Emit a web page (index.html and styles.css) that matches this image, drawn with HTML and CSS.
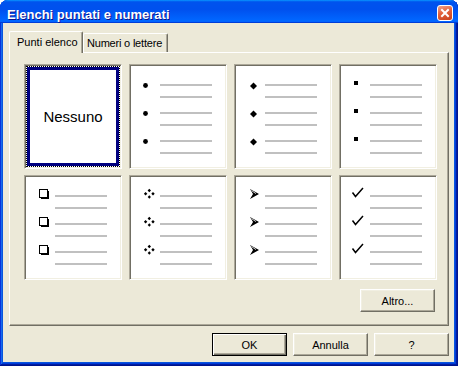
FILE: index.html
```html
<!DOCTYPE html>
<html lang="it">
<head>
    <meta charset="UTF-8">
    <title>Elenchi puntati e numerati</title>
    <link rel="stylesheet" href="styles.css">
</head>
<body>
    <div class="window">
        <div class="titlebar">
            <span class="title">Elenchi puntati e numerati</span>
            <button class="close" aria-label="Chiudi">
                <svg width="14" height="14" viewBox="0 0 14 14"><path d="M4 4 L10 10 M10 4 L4 10" stroke="#fff" stroke-width="2" stroke-linecap="square"/></svg>
            </button>
        </div>

        <div class="content">
            <div class="tabs">
                <div class="tab active">Punti elenco</div>
                <div class="tab">Numeri o lettere</div>
            </div>

            <section class="panel">
                <div class="grid">
                    <div class="tile none">
                        <div class="focus"><div class="sel">Nessuno</div></div>
                    </div>

                    <div class="tile">
                        <div class="item"><svg class="bullet" viewBox="0 0 30 16"><circle cx="15.5" cy="9.5" r="2.4"/></svg><div class="lines"><i></i><i></i></div></div>
                        <div class="item"><svg class="bullet" viewBox="0 0 30 16"><circle cx="15.5" cy="9.5" r="2.4"/></svg><div class="lines"><i></i><i></i></div></div>
                        <div class="item"><svg class="bullet" viewBox="0 0 30 16"><circle cx="15.5" cy="9.5" r="2.4"/></svg><div class="lines"><i></i><i></i></div></div>
                    </div>

                    <div class="tile">
                        <div class="item"><svg class="bullet" viewBox="0 0 30 16"><polygon points="18.5,6.5 22,10 18.5,13.5 15,10"/></svg><div class="lines"><i></i><i></i></div></div>
                        <div class="item"><svg class="bullet" viewBox="0 0 30 16"><polygon points="18.5,6.5 22,10 18.5,13.5 15,10"/></svg><div class="lines"><i></i><i></i></div></div>
                        <div class="item"><svg class="bullet" viewBox="0 0 30 16"><polygon points="18.5,6.5 22,10 18.5,13.5 15,10"/></svg><div class="lines"><i></i><i></i></div></div>
                    </div>

                    <div class="tile">
                        <div class="item"><svg class="bullet" viewBox="0 0 30 16"><rect x="14" y="5" width="4" height="4"/></svg><div class="lines"><i></i><i></i></div></div>
                        <div class="item"><svg class="bullet" viewBox="0 0 30 16"><rect x="14" y="5" width="4" height="4"/></svg><div class="lines"><i></i><i></i></div></div>
                        <div class="item"><svg class="bullet" viewBox="0 0 30 16"><rect x="14" y="5" width="4" height="4"/></svg><div class="lines"><i></i><i></i></div></div>
                    </div>

                    <div class="tile">
                        <div class="item"><svg class="bullet" viewBox="0 0 30 16"><rect x="14.5" y="2.5" width="8" height="8" fill="none" stroke="#000"/><path d="M23 4h1v8h-8v-1h7z"/></svg><div class="lines"><i></i><i></i></div></div>
                        <div class="item"><svg class="bullet" viewBox="0 0 30 16"><rect x="14.5" y="2.5" width="8" height="8" fill="none" stroke="#000"/><path d="M23 4h1v8h-8v-1h7z"/></svg><div class="lines"><i></i><i></i></div></div>
                        <div class="item"><svg class="bullet" viewBox="0 0 30 16"><rect x="14.5" y="2.5" width="8" height="8" fill="none" stroke="#000"/><path d="M23 4h1v8h-8v-1h7z"/></svg><div class="lines"><i></i><i></i></div></div>
                    </div>

                    <div class="tile">
                        <div class="item"><svg class="bullet" viewBox="0 0 30 16"><polygon points="19.3,1.7 21,3.5 19.3,5.2 17.6,3.5"/><polygon points="15.6,5 17.3,6.7 15.6,8.4 13.9,6.7"/><polygon points="23,5 24.7,6.7 23,8.4 21.3,6.7"/><polygon points="19.3,8.2 20.9,10 19.3,11.8 17.7,10"/></svg><div class="lines"><i></i><i></i></div></div>
                        <div class="item"><svg class="bullet" viewBox="0 0 30 16"><polygon points="19.3,1.7 21,3.5 19.3,5.2 17.6,3.5"/><polygon points="15.6,5 17.3,6.7 15.6,8.4 13.9,6.7"/><polygon points="23,5 24.7,6.7 23,8.4 21.3,6.7"/><polygon points="19.3,8.2 20.9,10 19.3,11.8 17.7,10"/></svg><div class="lines"><i></i><i></i></div></div>
                        <div class="item"><svg class="bullet" viewBox="0 0 30 16"><polygon points="19.3,1.7 21,3.5 19.3,5.2 17.6,3.5"/><polygon points="15.6,5 17.3,6.7 15.6,8.4 13.9,6.7"/><polygon points="23,5 24.7,6.7 23,8.4 21.3,6.7"/><polygon points="19.3,8.2 20.9,10 19.3,11.8 17.7,10"/></svg><div class="lines"><i></i><i></i></div></div>
                    </div>

                    <div class="tile">
                        <div class="item"><svg class="bullet" viewBox="0 0 30 16"><polygon points="15,2 24,7 15,12 18,7"/><path d="M16.5 3.6 L21 6.6" stroke="#fff" stroke-width="0.8"/></svg><div class="lines"><i></i><i></i></div></div>
                        <div class="item"><svg class="bullet" viewBox="0 0 30 16"><polygon points="15,2 24,7 15,12 18,7"/><path d="M16.5 3.6 L21 6.6" stroke="#fff" stroke-width="0.8"/></svg><div class="lines"><i></i><i></i></div></div>
                        <div class="item"><svg class="bullet" viewBox="0 0 30 16"><polygon points="15,2 24,7 15,12 18,7"/><path d="M16.5 3.6 L21 6.6" stroke="#fff" stroke-width="0.8"/></svg><div class="lines"><i></i><i></i></div></div>
                    </div>

                    <div class="tile">
                        <div class="item"><svg class="bullet" viewBox="0 0 30 16"><path d="M12.5 5.5 L15.5 9.5 L23 1" fill="none" stroke="#000" stroke-width="1.5"/></svg><div class="lines"><i></i><i></i></div></div>
                        <div class="item"><svg class="bullet" viewBox="0 0 30 16"><path d="M12.5 5.5 L15.5 9.5 L23 1" fill="none" stroke="#000" stroke-width="1.5"/></svg><div class="lines"><i></i><i></i></div></div>
                        <div class="item"><svg class="bullet" viewBox="0 0 30 16"><path d="M12.5 5.5 L15.5 9.5 L23 1" fill="none" stroke="#000" stroke-width="1.5"/></svg><div class="lines"><i></i><i></i></div></div>
                    </div>
                </div>

                <div class="panel-foot">
                    <button class="btn">Altro...</button>
                </div>
            </section>

            <div class="actions">
                <button class="btn default">OK</button>
                <button class="btn">Annulla</button>
                <button class="btn">?</button>
            </div>
        </div>
    </div>
</body>
</html>
```

FILE: styles.css
```css
body {
    margin: 0;
    background-color: #fff;
    font-family: "Liberation Sans", Arial, sans-serif;
    font-size: 11px;
    color: #000;
}

.window {
    width: 458px;
    height: 366px;
    box-sizing: border-box;
    display: flex;
    flex-direction: column;
    background-color: #0855dd;
    border-radius: 8px 8px 0 0;
    overflow: hidden;
    box-shadow: inset -1px -1px #00138c, inset 1px 1px #0831d9,
                inset -2px -2px #001ea0, inset 2px 2px #166aee,
                inset -3px -3px #003bda, inset 3px 3px #0855dd;
}

/* title bar */
.titlebar {
    height: 23px;
    display: flex;
    align-items: flex-start;
    padding: 0 5px 0 7px;
    background: linear-gradient(180deg, #0997ff, #0053ee 8%, #0050ee 40%, #06f 88%, #06f 93%, #005bff 95%, #003dd7 96%, #003dd7);
}

.title {
    flex: 1;
    margin-top: 7px;
    color: #fff;
    font-weight: bold;
    font-size: 13px;
    line-height: 15px;
    text-shadow: 1px 1px #0f1089;
    white-space: nowrap;
}

.close {
    width: 16px;
    height: 16px;
    margin-top: 5px;
    padding: 0;
    box-sizing: border-box;
    border: 1px solid #fff;
    border-radius: 3px;
    display: flex;
    align-items: center;
    justify-content: center;
    background: linear-gradient(160deg, #f1a38b, #e2613b 45%, #c8401b);
}

.close svg {
    display: block;
}

/* dialog body */
.content {
    flex: 1;
    margin: 0 4px 4px 3px;
    padding: 8px 5px 6px 6px;
    background-color: #ece9d8;
    display: flex;
    flex-direction: column;
}

.tabs {
    height: 21px;
    display: flex;
    align-items: flex-end;
}

.tab {
    height: 19px;
    box-sizing: border-box;
    padding: 3px 0 0 3px;
    line-height: 13px;
    background-color: #ece9d8;
    border: 1px solid #fff;
    border-bottom: none;
    border-right-color: #716f64;
    border-radius: 2px 2px 0 0;
    box-shadow: inset -1px 0 #aca899;
    white-space: nowrap;
    width: 85px;
    letter-spacing: -0.2px;
}

.tab.active {
    position: relative;
    z-index: 1;
    width: 74px;
    height: 22px;
    margin-bottom: -1px;
    padding: 4px 0 0 7px;
    letter-spacing: 0;
}

.panel {
    height: 274px;
    box-sizing: border-box;
    padding: 11px 11px 13px 14px;
    border: 1px solid;
    border-color: #fff #716f64 #716f64 #fff;
    box-shadow: inset -1px -1px #aca899;
}

.grid {
    display: grid;
    grid-template-columns: repeat(4, 98px);
    grid-auto-rows: 105px;
    column-gap: 7px;
    row-gap: 6px;
}

.tile {
    box-sizing: border-box;
    padding-top: 19px;
    background-color: #fff;
    border: 1px solid;
    border-color: #aca899 #fff #fff #aca899;
    box-shadow: inset 1px 1px #716f64, inset -1px -1px #f1efe2;
}

.item {
    height: 28px;
    display: flex;
    align-items: flex-start;
}

.bullet {
    flex: none;
    width: 30px;
    height: 16px;
    margin-top: -8px;
}

.lines {
    width: 52px;
}

.lines i {
    display: block;
    height: 2px;
    margin-bottom: 10px;
    background-color: #c0c0c0;
}

/* selected "none" tile */
.tile.none {
    padding: 1px;
    display: flex;
}

.focus {
    flex: 1;
    display: flex;
    border: 1px dotted #000;
    background-color: #fff;
}

.sel {
    flex: 1;
    display: flex;
    align-items: center;
    justify-content: center;
    border: 3px solid #000080;
    font-size: 15px;
}

.panel-foot {
    display: flex;
    justify-content: flex-end;
    margin-top: 9px;
    padding-right: 2px;
}

/* buttons */
.btn {
    width: 75px;
    height: 23px;
    box-sizing: border-box;
    padding: 0;
    font-family: "Liberation Sans", Arial, sans-serif;
    font-size: 11px;
    color: #000;
    background-color: #ece9d8;
    border: 1px solid;
    border-color: #fff #716f64 #716f64 #fff;
    box-shadow: inset -1px -1px #aca899, inset 1px 1px #f1efe2;
}

.btn.default {
    border-color: #000;
    box-shadow: inset 1px 1px #fff, inset -1px -1px #716f64, inset -2px -2px #aca899;
}

.actions {
    display: flex;
    justify-content: flex-end;
    gap: 6px;
    margin-top: 7px;
}
```
